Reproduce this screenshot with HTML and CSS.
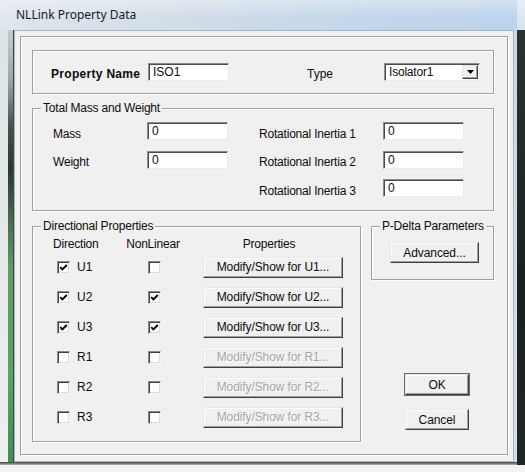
FILE: index.html
```html
<!DOCTYPE html>
<html>
<head>
<meta charset="utf-8">
<title>NLLink Property Data</title>
<link rel="stylesheet" href="styles.css">
</head>
<body>
<div class="desktop">
  <div class="window">
    <div class="titlebar"><span class="title">NLLink Property Data</span></div>
    <div class="window-body">
      <div class="frame-left"><div class="frame-glass"></div><div class="frame-shade"></div></div>
      <div class="client">
        <div class="panel">

          <div class="name-box">
            <span class="name-label">Property Name</span>
            <div class="field name-field">ISO1</div>
            <span class="type-label">Type</span>
            <div class="combo">
              <span class="combo-text">Isolator1</span>
              <span class="combo-btn"><svg width="7" height="4" viewBox="0 0 7 4"><path d="M0 0h7L3.5 4z" fill="#000"/></svg></span>
            </div>
          </div>

          <div class="group mass">
            <div class="group-title">Total Mass and Weight</div>
            <div class="mass-grid">
              <span class="lbl">Mass</span>
              <div class="field">0</div>
              <span class="lbl rlbl">Rotational Inertia 1</span>
              <div class="field">0</div>
              <span class="lbl">Weight</span>
              <div class="field">0</div>
              <span class="lbl rlbl">Rotational Inertia 2</span>
              <div class="field">0</div>
              <span class="lbl rlbl col3">Rotational Inertia 3</span>
              <div class="field">0</div>
            </div>
          </div>

          <div class="lower">
            <div class="group dir">
              <div class="group-title">Directional Properties</div>
              <div class="dir-grid">
                <span class="hd">Direction</span>
                <span class="hd hd-nl">NonLinear</span>
                <span class="hd hd-props">Properties</span>

                <span class="dir-cell"><span class="chk"><svg width="9" height="9" viewBox="0 0 9 9"><path d="M1.2 4.2 3.4 6.4 7.8 2" fill="none" stroke="#000" stroke-width="1.9"/></svg></span>U1</span>
                <span class="nl-cell"><span class="chk"></span></span>
                <button class="btn mod">Modify/Show for U1...</button>

                <span class="dir-cell"><span class="chk"><svg width="9" height="9" viewBox="0 0 9 9"><path d="M1.2 4.2 3.4 6.4 7.8 2" fill="none" stroke="#000" stroke-width="1.9"/></svg></span>U2</span>
                <span class="nl-cell"><span class="chk"><svg width="9" height="9" viewBox="0 0 9 9"><path d="M1.2 4.2 3.4 6.4 7.8 2" fill="none" stroke="#000" stroke-width="1.9"/></svg></span></span>
                <button class="btn mod">Modify/Show for U2...</button>

                <span class="dir-cell"><span class="chk"><svg width="9" height="9" viewBox="0 0 9 9"><path d="M1.2 4.2 3.4 6.4 7.8 2" fill="none" stroke="#000" stroke-width="1.9"/></svg></span>U3</span>
                <span class="nl-cell"><span class="chk"><svg width="9" height="9" viewBox="0 0 9 9"><path d="M1.2 4.2 3.4 6.4 7.8 2" fill="none" stroke="#000" stroke-width="1.9"/></svg></span></span>
                <button class="btn mod">Modify/Show for U3...</button>

                <span class="dir-cell"><span class="chk"></span>R1</span>
                <span class="nl-cell"><span class="chk"></span></span>
                <button class="btn mod" disabled>Modify/Show for R1...</button>

                <span class="dir-cell"><span class="chk"></span>R2</span>
                <span class="nl-cell"><span class="chk"></span></span>
                <button class="btn mod" disabled>Modify/Show for R2...</button>

                <span class="dir-cell"><span class="chk"></span>R3</span>
                <span class="nl-cell"><span class="chk"></span></span>
                <button class="btn mod" disabled>Modify/Show for R3...</button>
              </div>
            </div>

            <div class="side">
              <div class="group pdelta">
                <div class="group-title">P-Delta Parameters</div>
                <button class="btn adv">Advanced...</button>
              </div>
              <div class="actions">
                <button class="btn ok">OK</button>
                <button class="btn cancel">Cancel</button>
              </div>
            </div>
          </div>

        </div>
      </div>
      <div class="frame-right"></div>
    </div>
    <div class="frame-bottom"></div>
  </div>
  <div class="edge-right"><div class="edge-top"></div><div class="edge-mid"></div></div>
</div>
</body>
</html>
```

FILE: styles.css
```css
* { box-sizing: border-box; }

html, body {
  margin: 0;
  padding: 0;
}

body {
  width: 525px;
  height: 472px;
  overflow: hidden;
  background: #f2f2f2;
  font-family: "Liberation Sans", Arial, sans-serif;
  font-size: 12px;
  color: #0c0c0c;
}

/* desktop behind the dialog window */
.desktop {
  display: flex;
  width: 525px;
  height: 472px;
  background: #f2f2f2;
}

.edge-right {
  width: 8px;
  display: flex;
  flex-direction: column;
}
.edge-top { height: 30px; background: linear-gradient(#e8eef4, #d7e2ec); }
.edge-mid { height: 435px; background: linear-gradient(#2a3232, #1a1f20 60%, #202622); }

/* window chrome */
.window {
  width: 517px;
  display: flex;
  flex-direction: column;
}

.titlebar {
  height: 30px;
  display: flex;
  align-items: center;
  padding-left: 16px;
  background:
    linear-gradient(rgba(255,255,255,0.35), rgba(255,255,255,0) 60%),
    linear-gradient(90deg, #dfe6ec 0%, #d2dde8 35%, #c3d6ea 70%, #bcd3ec 100%);
}
.title {
  font-family: "Noto Sans", "Open Sans", sans-serif;
  font-size: 12px;
  color: #1a1a1a;
  padding-bottom: 2px;
}

.window-body {
  display: flex;
  height: 432px;
}

.frame-left {
  width: 14px;
  display: flex;
}
.frame-glass { width: 8px; background: linear-gradient(#dce3e8, #e4e8e8 40%, #eef0ee); }
.frame-shade {
  width: 6px;
  background: linear-gradient(#c4ccd0 0%, #9aa4a8 12%, #4a5250 22%, #2e3634 32%, #5f9a68 55%, #56a466 80%, #3f8e55 100%);
  border-right: 1px solid #3c4a44;
}

.frame-right {
  width: 3px;
  background: linear-gradient(#cbd9e6, #d5dfe8);
}

.frame-bottom {
  height: 3px;
  background: linear-gradient(#3e3e3e, #b4b4b4);
}

/* dialog client area */
.client {
  width: 500px;
  height: 432px;
  background: #f0f0f0;
  border: 1px solid #a9b4bf;
  padding: 5px;
}

.panel {
  height: 419px;
  border: 1px solid #a0a0a0;
  box-shadow: inset 1px 1px 0 #fff, 1px 1px 0 #fff;
  padding: 13px 13px 12px 11px;
}

/* etched group boxes */
.group,
.name-box {
  border: 1px solid #a0a0a0;
  box-shadow: inset 1px 1px 0 #fff, 1px 1px 0 #fff;
}

.group-title {
  width: fit-content;
  margin: -8px 0 0 8px;
  padding: 0 2px;
  line-height: 14px;
  height: 14px;
  background: #f0f0f0;
  letter-spacing: -0.2px;
  white-space: nowrap;
}

.name-box {
  height: 44px;
  display: flex;
  align-items: center;
  padding-left: 18px;
}
.name-label {
  width: 97px;
  font-weight: bold;
  font-size: 12px;
  letter-spacing: 0.3px;
  white-space: nowrap;
  padding-top: 4px;
}
.type-label {
  margin-left: 78px;
  width: 77px;
  padding-top: 4px;
}

/* sunken edit fields */
.field {
  height: 18px;
  width: 81px;
  background: #fff;
  border: 1px solid;
  border-color: #8c8c8c #ececec #ececec #8c8c8c;
  box-shadow: inset 1px 1px 0 #4c4c4c;
  padding: 2px 0 0 4px;
  line-height: 13px;
  font-size: 12px;
  white-space: nowrap;
}

.combo {
  width: 96px;
  height: 18px;
  display: flex;
  align-items: center;
  justify-content: space-between;
  background: #fff;
  border: 1px solid;
  border-color: #8c8c8c #ececec #ececec #8c8c8c;
  box-shadow: inset 1px 1px 0 #4c4c4c;
  padding: 1px 1px 1px 4px;
}
.combo-text { line-height: 13px; letter-spacing: -0.2px; }
.combo-btn {
  width: 16px;
  height: 14px;
  display: flex;
  align-items: center;
  justify-content: center;
  background: #f0f0f0;
  border: 1px solid;
  border-color: #e6e6e6 #404040 #404040 #e6e6e6;
  box-shadow: inset -1px -1px 0 #a0a0a0;
}

/* mass and inertia group */
.mass {
  margin-top: 14px;
  height: 103px;
}
.mass-grid {
  display: grid;
  grid-template-columns: 94px 81px 155px 81px;
  grid-auto-rows: 18px;
  row-gap: 10.5px;
  align-items: center;
  padding: 7px 0 0 20px;
}
.lbl {
  letter-spacing: -0.2px;
  white-space: nowrap;
  line-height: 14px;
  padding-top: 5px;
}
.rlbl { padding-left: 31px; }
.col3 { grid-column: 3; }

/* lower area: directional + side column */
.lower {
  display: flex;
  gap: 10px;
  margin-top: 15px;
}

.dir {
  width: 329px;
  height: 216px;
}

.dir-grid {
  display: grid;
  grid-template-columns: 73px 54px 23px 140px;
  grid-template-rows: 16px repeat(6, 30px);
  align-items: center;
  padding: 3px 0 0 20px;
}
.hd {
  letter-spacing: -0.2px;
  line-height: 14px;
  white-space: nowrap;
}
.hd-nl { justify-self: center; }
.hd-props { grid-column: 4; justify-self: center; padding-right: 8px; }

.dir-cell {
  display: flex;
  align-items: center;
  gap: 7px;
  padding-left: 4px;
  letter-spacing: 0.2px;
}
.nl-cell {
  display: flex;
  justify-content: center;
  padding-left: 2px;
}
.mod { grid-column: 4; }

/* classic sunken checkbox */
.chk {
  width: 13px;
  height: 13px;
  display: flex;
  align-items: center;
  justify-content: center;
  background: #fff;
  border: 1px solid;
  border-color: #8a8a8a #f4f4f4 #f4f4f4 #8a8a8a;
  box-shadow: inset 1px 1px 0 #404040, inset -1px -1px 0 #dcdcdc;
  flex: none;
}

/* raised push buttons */
.btn {
  font-family: "Liberation Sans", Arial, sans-serif;
  font-size: 12px;
  color: #0c0c0c;
  background: #f0f0f0;
  border: 1px solid;
  border-color: #e8e8e8 #404040 #404040 #e8e8e8;
  box-shadow: inset -1px -1px 0 #a0a0a0, inset 1px 1px 0 #fff;
  padding: 0;
  margin: 0;
  height: 21px;
  white-space: nowrap;
  letter-spacing: -0.1px;
}
.btn:disabled {
  color: #a6a6a6;
  text-shadow: 1px 1px 0 #fff;
}
.mod { width: 140px; }

.side {
  width: 123px;
  display: flex;
  flex-direction: column;
}

.pdelta {
  height: 54px;
  display: flex;
  flex-direction: column;
  padding-left: 18px;
}
.pdelta .group-title { margin-left: -10px; }
.adv {
  width: 89px;
  height: 21px;
  margin-top: 9px;
}

.actions {
  margin-top: auto;
  display: flex;
  flex-direction: column;
  gap: 14px;
  padding: 0 0 12px 34px;
}
.actions .btn { width: 64px; }
.ok { outline: 1px solid #6a6a6a; outline-offset: 0; }
```
